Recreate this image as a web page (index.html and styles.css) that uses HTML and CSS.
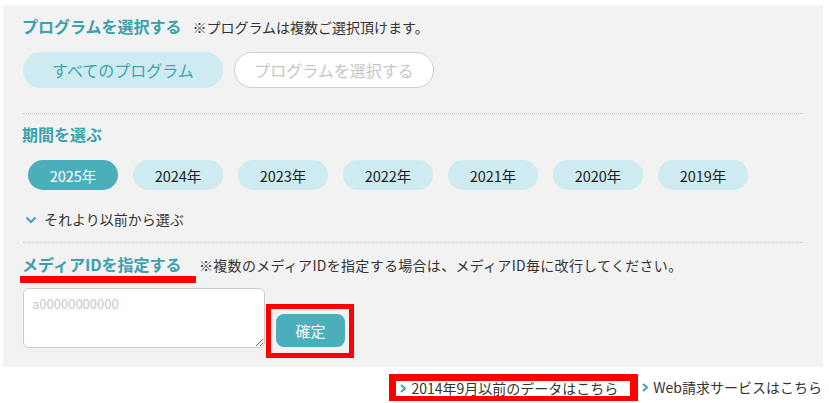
FILE: index.html
```html
<!DOCTYPE html>
<html lang="ja">
<head>
<meta charset="utf-8">
<title>プログラムを選択する</title>
<link rel="stylesheet" href="styles.css">
</head>
<body>
<div class="panel">
  <div class="head">
    <span class="title">プログラムを選択する</span>
    <span class="note">※プログラムは複数ご選択頂けます。</span>
  </div>
  <div class="pills">
    <span class="pill pill-on">すべてのプログラム</span>
    <span class="pill pill-off">プログラムを選択する</span>
  </div>
  <div class="rule"></div>
  <div class="title sec">期間を選ぶ</div>
  <div class="years">
    <span class="year year-on">2025年</span>
    <span class="year">2024年</span>
    <span class="year">2023年</span>
    <span class="year">2022年</span>
    <span class="year">2021年</span>
    <span class="year">2020年</span>
    <span class="year">2019年</span>
  </div>
  <div class="older">
    <svg class="down" width="12" height="8" viewBox="0 0 12 8"><polyline points="1.5,1.5 6,6 10.5,1.5" fill="none" stroke="#3fa6b3" stroke-width="2.2"/></svg>
    <span>それより以前から選ぶ</span>
  </div>
  <div class="rule rule2"></div>
  <div class="head media-head">
    <span class="title marked">メディアIDを指定する</span>
    <span class="note">※複数のメディアIDを指定する場合は、メディアID毎に改行してください。</span>
  </div>
  <div class="entry">
    <textarea class="ids" placeholder="a00000000000"></textarea>
    <div class="redbox"><button class="ok">確定</button></div>
  </div>
</div>
<div class="links">
  <span class="link redlink"><svg class="chev" width="6" height="9" viewBox="0 0 6 9"><polyline points="1,1 5,4.5 1,8" fill="none" stroke="#3fa6b3" stroke-width="2"/></svg>2014年9月以前のデータはこちら</span>
  <span class="link"><svg class="chev" width="6" height="9" viewBox="0 0 6 9"><polyline points="1,1 5,4.5 1,8" fill="none" stroke="#3fa6b3" stroke-width="2"/></svg>Web請求サービスはこちら</span>
</div>
</body>
</html>
```
FILE: styles.css
```css
body {
  margin: 0;
  background: #ffffff;
  font-family: "Noto Sans CJK JP", "Noto Sans", sans-serif;
  color: #333333;
}
.panel {
  margin: 5px 0 0 3px;
  width: 820px;
  height: 362px;
  box-sizing: border-box;
  background: #f2f2f2;
  padding: 9px 20px 0 20px;
}
.head {
  display: flex;
  align-items: baseline;
  gap: 11px;
  line-height: 24px;
}
.title {
  font-size: 16px;
  font-weight: bold;
  color: #3aa1ae;
  margin-left: -1px;
  line-height: 24px;
}
.note {
  font-size: 14px;
  color: #333333;
}
.pills {
  display: flex;
  gap: 11px;
  margin-top: 13px;
}
.pill {
  width: 200px;
  height: 36px;
  box-sizing: border-box;
  border-radius: 18px;
  display: flex;
  align-items: center;
  justify-content: center;
  font-size: 16px;
}
.pill-on {
  background: #cdebf0;
  color: #40a4b1;
}
.pill-off {
  background: #ffffff;
  border: 1px solid #cfcfcf;
  color: #c6c6c6;
}
.rule {
  margin-top: 25px;
  border-top: 1px dotted #c4c4c4;
}
.rule2 {
  margin-top: 13px;
}
.sec {
  margin-top: 8px;
}
.years {
  display: flex;
  gap: 15px;
  margin-top: 14px;
  padding-left: 5px;
}
.year {
  width: 90px;
  height: 30px;
  border-radius: 15px;
  background: #cdebf0;
  display: flex;
  align-items: center;
  justify-content: center;
  font-size: 14.5px;
  color: #1e1e1e;
}
.year-on {
  background: #4aafbb;
  color: #ffffff;
}
.older {
  display: flex;
  align-items: center;
  gap: 7px;
  margin-top: 19px;
  height: 20px;
  font-size: 14px;
  color: #333333;
}
.down {
  margin-left: 2px;
  margin-top: 1px;
}
.media-head {
  margin-top: 10px;
  gap: 3px;
}
.marked {
  display: inline-block;
  width: 176px;
  box-sizing: border-box;
  line-height: 21px;
  padding: 0 0 1px 2px;
  margin-left: -3px;
  border-bottom: 7px solid #ff0000;
}
.media-head .note {
  letter-spacing: 0.3px;
}
.entry {
  display: flex;
  align-items: flex-start;
  margin-top: 5px;
}
.ids {
  width: 242px;
  height: 60px;
  box-sizing: border-box;
  margin: 0;
  border: 1px solid #cccccc;
  border-radius: 6px;
  background: #ffffff;
  padding: 5px 8px;
  font-family: "Noto Sans CJK JP", "Noto Sans", sans-serif;
  font-size: 13px;
}
.ids::placeholder {
  color: #c8c8c8;
}
.redbox {
  margin-top: 16px;
  margin-left: 1px;
  width: 88px;
  height: 54px;
  box-sizing: border-box;
  border: 5px solid #ff0000;
  padding: 5px 4px 6px 5px;
}
.ok {
  width: 69px;
  height: 33px;
  border: none;
  border-radius: 8px;
  background: #4aafbb;
  color: #ffffff;
  font-family: "Noto Sans CJK JP", "Noto Sans", sans-serif;
  font-size: 15px;
  padding: 0;
}
.links {
  margin: 7px 0 0 3px;
  width: 820px;
  display: flex;
  justify-content: flex-end;
  align-items: center;
  font-size: 14px;
  color: #333333;
}
.link {
  display: flex;
  align-items: center;
  line-height: 15px;
  padding-right: 1px;
}
.chev {
  margin-right: 5px;
}
.redlink {
  background: #ffffff;
  border-style: solid;
  border-color: #ff0000;
  border-width: 7px 8px 5px 7px;
  padding: 0 12px 0 4px;
  margin-right: 4px;
}
```
